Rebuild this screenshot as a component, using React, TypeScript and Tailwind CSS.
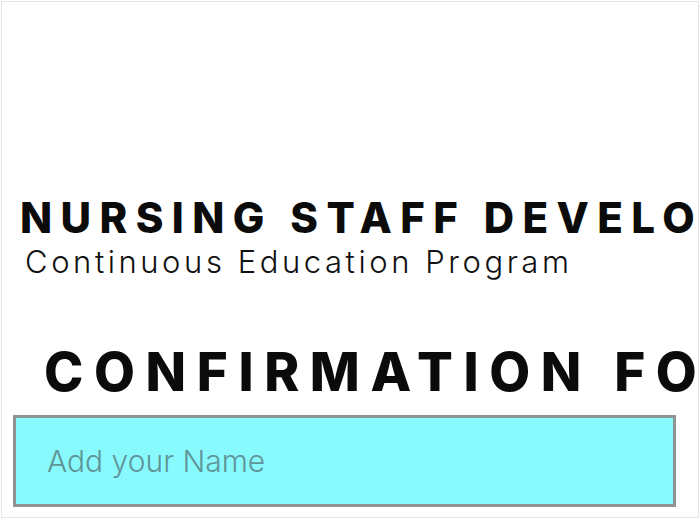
export default function App() {
  return (
    <div className="h-[520px] w-[700px] overflow-hidden bg-white p-px">
      <div className="h-[517px] w-full overflow-hidden border border-[#e6e6e6] bg-white">
        <header className="pt-[192px] pl-[18px] whitespace-nowrap">
          <h1 className="font-['Inter',sans-serif] text-[42px] font-extrabold leading-[48px] tracking-[0.2em] text-[#0b0b0b]">
            NURSING STAFF DEVELOPMENT
          </h1>
          <p className="mt-[3px] pl-[5px] font-['Inter',sans-serif] text-[31px] font-light leading-[34px] tracking-[0.115em] text-[#111]">
            Continuous Education Program
          </p>
        </header>

        <h2 className="mt-[63px] pl-[42px] whitespace-nowrap font-['Inter',sans-serif] text-[53px] font-extrabold leading-[60px] tracking-[0.2em] text-[#0b0b0b]">
          CONFIRMATION FORM
        </h2>

        <div className="mt-[13px] ml-[11px] w-[663px]">
          <input
            type="text"
            placeholder="Add your Name"
            className="h-[92px] w-full border-[3px] border-[#8f9394] bg-[#88fafd] pl-[31px] font-['Inter',sans-serif] text-[30px] font-light text-[#333] placeholder:text-[#5f9598] outline-none"
          />
        </div>
      </div>
    </div>
  );
}
